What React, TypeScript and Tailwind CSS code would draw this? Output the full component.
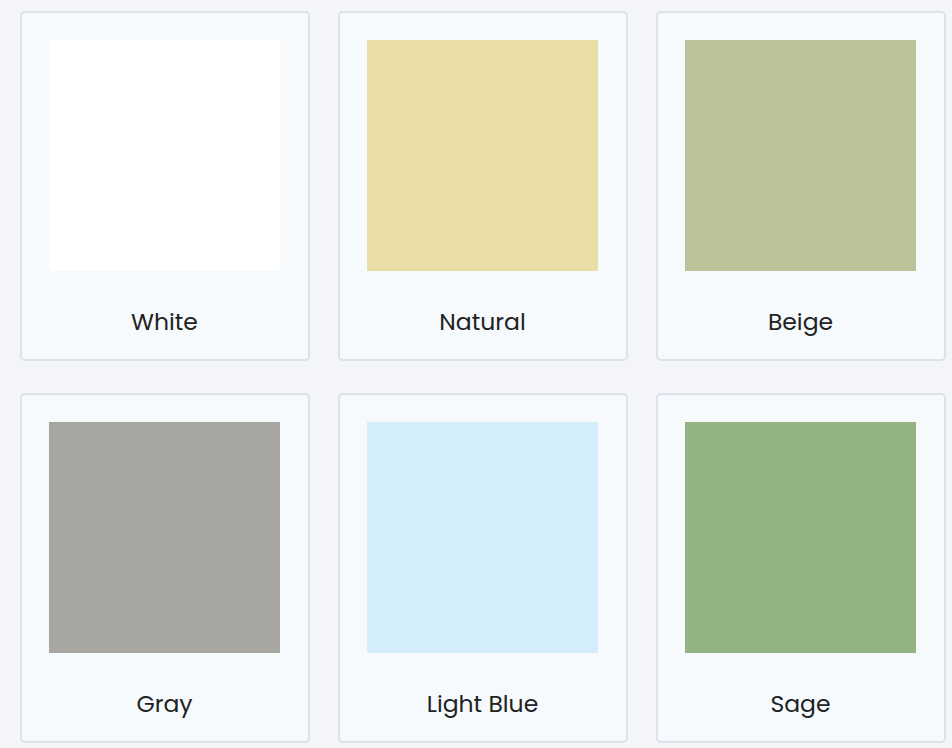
const swatches = [
  { name: "White", color: "bg-[#ffffff]" },
  { name: "Natural", color: "bg-[#eadda8]" },
  { name: "Beige", color: "bg-[#bcc39b]" },
  { name: "Gray", color: "bg-[#a8a6a1]" },
  { name: "Light Blue", color: "bg-[#d3eefa]" },
  { name: "Sage", color: "bg-[#93b482]" },
];

export default function App() {
  return (
    <div className="min-h-[748px] bg-[#f4f5f9] pl-[19.5px] pt-[11px] font-['Poppins','Inter',sans-serif]">
      <div className="grid grid-cols-[290px_290px_290px] gap-x-[28px] gap-y-[32px]">
        {swatches.map((s) => (
          <div
            key={s.name}
            className="flex flex-col rounded-[5px] border-2 border-[#d8e3eb] bg-[#f6fafd] px-[27.5px] pt-[27px]"
          >
            <div className={`h-[231px] w-full ${s.color}`} />
            <div className="mt-[35px] pb-[21px] text-center text-[23.5px] font-normal leading-[32px] text-[#222222]">
              {s.name}
            </div>
          </div>
        ))}
      </div>
    </div>
  );
}
